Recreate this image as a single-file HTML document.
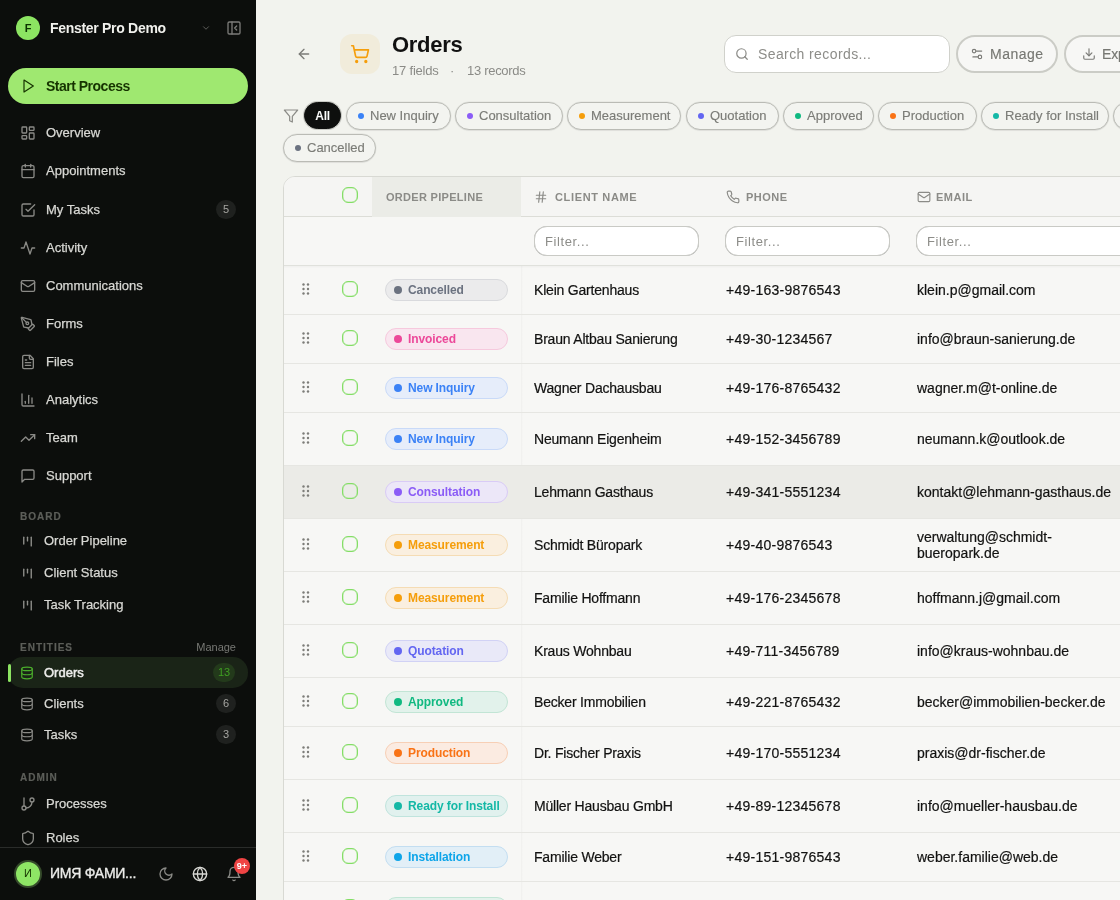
<!DOCTYPE html>
<html><head><meta charset="utf-8">
<style>
*{box-sizing:border-box;margin:0;padding:0}
html,body{width:1120px;height:900px;overflow:hidden}
.sb,#main{will-change:transform}
body{background:#f2f3ee;font-family:"Liberation Sans",sans-serif;position:relative;color:#161616}
.a{position:absolute}
svg{display:block}
.sb{position:absolute;left:0;top:0;width:256px;height:900px;background:#0c0e0c;overflow:hidden}
.ic{position:absolute;fill:none;stroke-linecap:round;stroke-linejoin:round}
.nav{position:absolute;left:46px;font-size:13px;color:#d8d8d4;-webkit-text-stroke:0.25px #d8d8d4;line-height:16px;white-space:nowrap}
.sec{position:absolute;left:20px;font-size:10px;font-weight:bold;color:#5c5e59;letter-spacing:1px;line-height:12px;-webkit-text-stroke:0.2px #5c5e59}
.cnt{position:absolute;width:20px;height:19px;border-radius:10px;background:#1f211f;color:#a6a6a2;font-size:11px;line-height:19px;text-align:center}
.sub{font-size:13px;color:#8b8b87;line-height:16px}
.btn{top:35px;height:38px;border-radius:19px;background:#f7f7f5;border:2px solid #cbccc6}
.chip{top:102px;height:28px;border-radius:14px;border:1px solid #babbb5;box-shadow:0 0 0 0.5px rgba(0,0,0,0.07),0 1px 1px rgba(0,0,0,0.05);background:#f3f4f0;display:flex;align-items:center;padding-left:11px;font-size:13px;color:#7b7c77;-webkit-text-stroke:0.15px #7b7c77;white-space:nowrap;line-height:16px}
.chip i{display:inline-block;width:6px;height:6px;border-radius:3px;margin-right:6px;flex:none}
.tbl{position:absolute;left:283px;top:176px;width:900px;height:760px;background:#f7f7f5;border:1px solid #d8d9d3;border-radius:12px 0 0 0;overflow:hidden}
.tbl .a, .tbl .ic{position:absolute}
.thead{position:absolute;left:0;top:0;width:100%;height:40px;border-bottom:1px solid #dcddd7;background:#f5f5f3}
.th{position:absolute;top:14px;font-size:11px;font-weight:bold;color:#8b8b87;letter-spacing:0.4px;line-height:12px}
.cb{position:absolute;width:16px;height:16px;border:1px solid #84de66;box-shadow:inset 0 0 0 0.3px #84de66;border-radius:6px;background:transparent}
.frow{position:absolute;left:-1px;top:40px;width:100%;height:49px;border-bottom:1px solid #e0e1dc;box-shadow:0 1px 2px rgba(0,0,0,0.04)}
.flt{position:absolute;top:9px;height:30px;border-radius:13px;border:1px solid #c9cac5;box-shadow:0 0 0.6px rgba(0,0,0,0.3);background:#fff;font-size:13px;color:#8d8d89;padding-left:10px;line-height:29px;letter-spacing:0.6px}
.row{position:absolute;left:-1px;width:902px;border-bottom:1px solid #e6e6e2}
.row.hov{background:#ebebe7}
.gripw{position:absolute;left:19px;top:50%;margin-top:-7px}
.grip{fill:#7d7d79}
.row .cb{left:59px;top:50%;margin-top:-9px}
.badge{position:absolute;left:102px;top:50%;margin-top:-11px;width:123px;height:22px;border:1px solid;border-radius:11px;font-size:12px;font-weight:bold;line-height:20px;padding-left:22px;white-space:nowrap;letter-spacing:-0.1px}
.badge i{position:absolute;left:8px;top:6px;width:8px;height:8px;border-radius:4px}
.c1,.c2,.c3{position:absolute;top:50%;margin-top:-8px;font-size:14px;line-height:16px;color:#121211;-webkit-text-stroke:0.2px #121211;white-space:nowrap}
.c1{left:251px;letter-spacing:-0.2px}
.c2{left:443px;letter-spacing:0.25px}
.c3{left:634px}
.c3.two{margin-top:-16px}
.vdiv{position:absolute;left:237px;top:89px;width:2px;height:700px;background:linear-gradient(90deg,rgba(0,0,0,0.03),rgba(0,0,0,0))}
</style></head><body>
<div class="sb">
  <div class="a" style="left:16px;top:16px;width:24px;height:24px;border-radius:12px;background:#8ce462;color:#0b3300;font-size:11px;font-weight:bold;text-align:center;line-height:24px">F</div>
  <div class="a" style="left:50px;top:20px;font-size:14px;font-weight:bold;color:#f1f1ed;line-height:16px;letter-spacing:-0.3px">Fenster Pro Demo</div>
  <svg class="ic" style="left:201px;top:23px" width="10" height="10" viewBox="0 0 24 24" stroke="#6d6d6a" stroke-width="2"><path d="m6 9 6 6 6-6"/></svg>
  <svg class="ic" style="left:226px;top:20px" width="16" height="16" viewBox="0 0 24 24" stroke="#7b7b78" stroke-width="2"><rect width="18" height="18" x="3" y="3" rx="2"/><path d="M9 3v18"/><path d="m16 15-3-3 3-3"/></svg>

  <div class="a" style="left:8px;top:68px;width:240px;height:36px;border-radius:18px;background:#9fe870"></div>
  <svg class="ic" style="left:20px;top:78px" width="16" height="16" viewBox="0 0 24 24" stroke="#163300" stroke-width="1.8"><polygon points="6 3 20 12 6 21 6 3"/></svg>
  <div class="a" style="left:46px;top:78px;font-size:14px;font-weight:bold;color:#163300;line-height:16px;letter-spacing:-0.5px">Start Process</div>

  <!-- nav -->
  <svg class="ic" style="left:20px;top:125px" width="16" height="16" viewBox="0 0 24 24" stroke="#8a8a86" stroke-width="2"><rect width="7" height="9" x="3" y="3" rx="1"/><rect width="7" height="5" x="14" y="3" rx="1"/><rect width="7" height="9" x="14" y="12" rx="1"/><rect width="7" height="5" x="3" y="16" rx="1"/></svg>
  <div class="nav" style="top:125px">Overview</div>
  <svg class="ic" style="left:20px;top:163px" width="16" height="16" viewBox="0 0 24 24" stroke="#8a8a86" stroke-width="2"><path d="M8 2v4"/><path d="M16 2v4"/><rect width="18" height="18" x="3" y="4" rx="2"/><path d="M3 10h18"/></svg>
  <div class="nav" style="top:163px">Appointments</div>
  <svg class="ic" style="left:20px;top:202px" width="16" height="16" viewBox="0 0 24 24" stroke="#8a8a86" stroke-width="2"><path d="m9 11 3 3L22 4"/><path d="M21 12v7a2 2 0 0 1-2 2H5a2 2 0 0 1-2-2V5a2 2 0 0 1 2-2h11"/></svg>
  <div class="nav" style="top:202px">My Tasks</div>
  <div class="cnt" style="left:216px;top:200px">5</div>
  <svg class="ic" style="left:20px;top:240px" width="16" height="16" viewBox="0 0 24 24" stroke="#8a8a86" stroke-width="2"><polyline points="22 12 18 12 15 21 9 3 6 12 2 12"/></svg>
  <div class="nav" style="top:240px">Activity</div>
  <svg class="ic" style="left:20px;top:278px" width="16" height="16" viewBox="0 0 24 24" stroke="#8a8a86" stroke-width="2"><rect width="20" height="16" x="2" y="4" rx="2"/><path d="m22 7-8.97 5.7a1.94 1.94 0 0 1-2.06 0L2 7"/></svg>
  <div class="nav" style="top:278px">Communications</div>
  <svg class="ic" style="left:20px;top:316px" width="16" height="16" viewBox="0 0 24 24" stroke="#8a8a86" stroke-width="2"><path d="M15.707 21.293a1 1 0 0 1-1.414 0l-1.586-1.586a1 1 0 0 1 0-1.414l5.586-5.586a1 1 0 0 1 1.414 0l1.586 1.586a1 1 0 0 1 0 1.414z"/><path d="m18 13-1.375-6.874a1 1 0 0 0-.746-.776L3.235 2.028a1 1 0 0 0-1.207 1.207L5.35 15.879a1 1 0 0 0 .776.746L13 18"/><path d="m2.3 2.3 7.286 7.286"/><circle cx="11" cy="11" r="2"/></svg>
  <div class="nav" style="top:316px">Forms</div>
  <svg class="ic" style="left:20px;top:354px" width="16" height="16" viewBox="0 0 24 24" stroke="#8a8a86" stroke-width="2"><path d="M15 2H6a2 2 0 0 0-2 2v16a2 2 0 0 0 2 2h12a2 2 0 0 0 2-2V7Z"/><path d="M14 2v4a2 2 0 0 0 2 2h4"/><path d="M10 9H8"/><path d="M16 13H8"/><path d="M16 17H8"/></svg>
  <div class="nav" style="top:354px">Files</div>
  <svg class="ic" style="left:20px;top:392px" width="16" height="16" viewBox="0 0 24 24" stroke="#8a8a86" stroke-width="2"><path d="M3 3v16a2 2 0 0 0 2 2h16"/><path d="M18 17V9"/><path d="M13 17V5"/><path d="M8 17v-3"/></svg>
  <div class="nav" style="top:392px">Analytics</div>
  <svg class="ic" style="left:20px;top:430px" width="16" height="16" viewBox="0 0 24 24" stroke="#8a8a86" stroke-width="2"><polyline points="22 7 13.5 15.5 8.5 10.5 2 17"/><polyline points="16 7 22 7 22 13"/></svg>
  <div class="nav" style="top:430px">Team</div>
  <svg class="ic" style="left:20px;top:468px" width="16" height="16" viewBox="0 0 24 24" stroke="#8a8a86" stroke-width="2"><path d="M21 15a2 2 0 0 1-2 2H7l-4 4V5a2 2 0 0 1 2-2h14a2 2 0 0 1 2 2z"/></svg>
  <div class="nav" style="top:468px">Support</div>

  <div class="sec" style="top:511px">BOARD</div>
  <svg class="ic" style="left:20px;top:534px" width="15" height="15" viewBox="0 0 24 24" stroke="#8e8e8a" stroke-width="2.2"><path d="M6 5v11"/><path d="M12 5v6"/><path d="M18 5v14"/></svg>
  <div class="nav" style="left:44px;top:533px">Order Pipeline</div>
  <svg class="ic" style="left:20px;top:566px" width="15" height="15" viewBox="0 0 24 24" stroke="#8e8e8a" stroke-width="2.2"><path d="M6 5v11"/><path d="M12 5v6"/><path d="M18 5v14"/></svg>
  <div class="nav" style="left:44px;top:565px">Client Status</div>
  <svg class="ic" style="left:20px;top:598px" width="15" height="15" viewBox="0 0 24 24" stroke="#8e8e8a" stroke-width="2.2"><path d="M6 5v11"/><path d="M12 5v6"/><path d="M18 5v14"/></svg>
  <div class="nav" style="left:44px;top:597px">Task Tracking</div>

  <div class="sec" style="top:642px">ENTITIES</div>
  <div class="a" style="right:20px;top:641px;font-size:11px;color:#777874;line-height:13px">Manage</div>
  <div class="a" style="left:8px;top:657px;width:240px;height:31px;border-radius:15px;background:#1a2417"></div>
  <div class="a" style="left:8px;top:664px;width:3px;height:18px;border-radius:2px;background:#8ce462"></div>
  <svg class="ic" style="left:20px;top:666px" width="14" height="14" viewBox="0 0 24 24" stroke="#4caf2c" stroke-width="2"><ellipse cx="12" cy="5" rx="9" ry="3"/><path d="M3 5V19A9 3 0 0 0 21 19V5"/><path d="M3 12A9 3 0 0 0 21 12"/></svg>
  <div class="nav" style="left:44px;top:665px;color:#ececea;-webkit-text-stroke:0.5px #ececea">Orders</div>
  <div class="cnt" style="left:213px;top:663px;width:22px;background:#233a1b;color:#3f9f22">13</div>
  <svg class="ic" style="left:20px;top:697px" width="14" height="14" viewBox="0 0 24 24" stroke="#8a8a86" stroke-width="2"><ellipse cx="12" cy="5" rx="9" ry="3"/><path d="M3 5V19A9 3 0 0 0 21 19V5"/><path d="M3 12A9 3 0 0 0 21 12"/></svg>
  <div class="nav" style="left:44px;top:696px">Clients</div>
  <div class="cnt" style="left:216px;top:694px">6</div>
  <svg class="ic" style="left:20px;top:728px" width="14" height="14" viewBox="0 0 24 24" stroke="#8a8a86" stroke-width="2"><ellipse cx="12" cy="5" rx="9" ry="3"/><path d="M3 5V19A9 3 0 0 0 21 19V5"/><path d="M3 12A9 3 0 0 0 21 12"/></svg>
  <div class="nav" style="left:44px;top:727px">Tasks</div>
  <div class="cnt" style="left:216px;top:725px">3</div>

  <div class="sec" style="top:772px">ADMIN</div>
  <svg class="ic" style="left:20px;top:796px" width="16" height="16" viewBox="0 0 24 24" stroke="#8a8a86" stroke-width="2"><line x1="6" x2="6" y1="3" y2="15"/><circle cx="18" cy="6" r="3"/><circle cx="6" cy="18" r="3"/><path d="M18 9a9 9 0 0 1-9 9"/></svg>
  <div class="nav" style="top:796px">Processes</div>
  <svg class="ic" style="left:20px;top:830px" width="16" height="16" viewBox="0 0 24 24" stroke="#8a8a86" stroke-width="2"><path d="M20 13c0 5-3.5 7.5-7.66 8.95a1 1 0 0 1-.67-.01C7.5 20.5 4 18 4 13V6a1 1 0 0 1 1-1c2 0 4.5-1.2 6.24-2.72a1.17 1.17 0 0 1 1.52 0C14.51 3.81 17 5 19 5a1 1 0 0 1 1 1z"/></svg>
  <div class="nav" style="top:830px">Roles</div>

  <div class="a" style="left:0;top:847px;width:256px;height:53px;background:#0c0e0c;border-top:1px solid #2a2c2a"></div>
  <div class="a" style="left:14px;top:860px;width:28px;height:28px;border-radius:14px;background:#8ee565;border:2.5px solid #34492a;color:#163300;font-size:11px;text-align:center;line-height:23px">И</div>
  <div class="a" style="left:50px;top:865px;font-size:14px;color:#ececea;-webkit-text-stroke:0.35px #ececea;line-height:16px;letter-spacing:-0.25px">ИМЯ ФАМИ...</div>
  <svg class="ic" style="left:158px;top:866px" width="16" height="16" viewBox="0 0 24 24" stroke="#8a8a86" stroke-width="2"><path d="M12 3a6 6 0 0 0 9 9 9 9 0 1 1-9-9Z"/></svg>
  <svg class="ic" style="left:192px;top:866px" width="16" height="16" viewBox="0 0 24 24" stroke="#d8d8d4" stroke-width="2"><circle cx="12" cy="12" r="10"/><path d="M12 2a14.5 14.5 0 0 0 0 20 14.5 14.5 0 0 0 0-20"/><path d="M2 12h20"/></svg>
  <svg class="ic" style="left:226px;top:866px" width="16" height="16" viewBox="0 0 24 24" stroke="#8a8a86" stroke-width="2"><path d="M6 8a6 6 0 0 1 12 0c0 7 3 9 3 9H3s3-2 3-9"/><path d="M10.3 21a1.94 1.94 0 0 0 3.4 0"/></svg>
  <div class="a" style="left:234px;top:858px;width:16px;height:16px;border-radius:8px;background:#ef4444;color:#fff;font-size:9px;font-weight:bold;text-align:center;line-height:16px">9+</div>
</div>

<!-- MAIN -->
<div id="main">
  <svg class="ic" style="left:296px;top:46px" width="16" height="16" viewBox="0 0 24 24" stroke="#7b7b77" stroke-width="2"><path d="m12 19-7-7 7-7"/><path d="M19 12H5"/></svg>
  <div class="a" style="left:340px;top:34px;width:40px;height:40px;border-radius:12px;background:#f1ecdb"></div>
  <svg class="ic" style="left:350px;top:44px" width="20" height="20" viewBox="0 0 24 24" stroke="#f59e0b" stroke-width="2"><circle cx="8" cy="21" r="1"/><circle cx="19" cy="21" r="1"/><path d="M2.05 2.05h2l2.66 12.42a2 2 0 0 0 2 1.58h9.78a2 2 0 0 0 1.95-1.57l1.65-7.43H5.12"/></svg>
  <div class="a" style="left:392px;top:32px;font-size:22px;font-weight:bold;color:#111;line-height:26px;letter-spacing:-0.3px">Orders</div>
  <div class="a sub" style="left:392px;top:63px;letter-spacing:-0.2px">17 fields</div>
  <div class="a sub" style="left:450px;top:63px">·</div>
  <div class="a sub" style="left:467px;top:63px;letter-spacing:-0.3px">13 records</div>

  <div class="a" style="left:724px;top:35px;width:226px;height:38px;border-radius:12px;background:#fff;border:1px solid #d0d1cb"></div>
  <svg class="ic" style="left:735px;top:47px" width="14" height="14" viewBox="0 0 24 24" stroke="#8b8b87" stroke-width="2.1"><circle cx="11" cy="11" r="8"/><path d="m21 21-4.3-4.3"/></svg>
  <div class="a" style="left:758px;top:46px;font-size:14px;color:#8d8d89;line-height:16px;letter-spacing:0.4px">Search records...</div>

  <div class="a btn" style="left:956px;width:102px"></div>
  <svg class="ic" style="left:970px;top:47px" width="14" height="14" viewBox="0 0 24 24" stroke="#7b7b77" stroke-width="2"><path d="M20 7h-9"/><path d="M14 17H5"/><circle cx="17" cy="17" r="3"/><circle cx="7" cy="7" r="3"/></svg>
  <div class="a" style="left:990px;top:46px;font-size:14px;color:#777873;line-height:16px;letter-spacing:0.5px;-webkit-text-stroke:0.15px #777873">Manage</div>
  <div class="a btn" style="left:1064px;width:110px"></div>
  <svg class="ic" style="left:1082px;top:47px" width="14" height="14" viewBox="0 0 24 24" stroke="#7b7b77" stroke-width="2"><path d="M21 15v4a2 2 0 0 1-2 2H5a2 2 0 0 1-2-2v-4"/><polyline points="7 10 12 15 17 10"/><line x1="12" x2="12" y1="15" y2="3"/></svg>
  <div class="a" style="left:1102px;top:46px;font-size:14px;color:#777873;line-height:16px;letter-spacing:-0.2px;-webkit-text-stroke:0.15px #777873">Export</div>

  <svg class="ic" style="left:283px;top:108px" width="16" height="16" viewBox="0 0 24 24" stroke="#8b8b87" stroke-width="1.8"><polygon points="22 3 2 3 10 12.46 10 19 14 21 14 12.46 22 3"/></svg>
  <div class="a chip" style="left:304px;top:102px;height:27px;width:37px;background:#0e0f0e;border-color:#0e0f0e;box-shadow:0 0 0 1px #c9cac4;color:#fff;font-weight:bold;font-size:12px;justify-content:center;padding:0;letter-spacing:-0.3px">All</div>
  <div class="a chip" style="left:346px;width:105px"><i style="background:#3b82f6"></i>New Inquiry</div>
  <div class="a chip" style="left:455px;width:108px"><i style="background:#8b5cf6"></i>Consultation</div>
  <div class="a chip" style="left:567px;width:114px"><i style="background:#f59e0b"></i>Measurement</div>
  <div class="a chip" style="left:686px;width:93px"><i style="background:#6366f1"></i>Quotation</div>
  <div class="a chip" style="left:783px;width:91px"><i style="background:#10b981"></i>Approved</div>
  <div class="a chip" style="left:878px;width:99px"><i style="background:#f97316"></i>Production</div>
  <div class="a chip" style="left:981px;width:128px"><i style="background:#14b8a6"></i>Ready for Install</div>
  <div class="a chip" style="left:1113px;width:100px"><i style="background:#0ea5e9"></i>Installation</div>
  <div class="a chip" style="left:283px;top:134px;width:93px"><i style="background:#6b7280"></i>Cancelled</div>

  <div class="tbl">
    <div class="thead">
      <div class="cb" style="left:58px;top:10px"></div>
      <div class="a" style="left:88px;top:0;width:149px;height:40px;background:#ebece7"></div>
      <div class="th" style="left:102px;letter-spacing:0.3px">ORDER PIPELINE</div>
      <svg class="ic" style="left:250px;top:13px" width="14" height="14" viewBox="0 0 24 24" stroke="#8b8b87" stroke-width="2"><line x1="4" x2="20" y1="9" y2="9"/><line x1="4" x2="20" y1="15" y2="15"/><line x1="10" x2="8" y1="3" y2="21"/><line x1="16" x2="14" y1="3" y2="21"/></svg>
      <div class="th" style="left:271px;letter-spacing:0.65px">CLIENT NAME</div>
      <svg class="ic" style="left:442px;top:13px" width="14" height="14" viewBox="0 0 24 24" stroke="#8b8b87" stroke-width="2"><path d="M22 16.92v3a2 2 0 0 1-2.18 2 19.790 19.79 0 0 1-8.63-3.07 19.5 19.5 0 0 1-6-6 19.79 19.79 0 0 1-3.07-8.67A2 2 0 0 1 4.110 2h3a2 2 0 0 1 2 1.72 12.84 12.84 0 0 0 .7 2.81 2 2 0 0 1-.45 2.11L8.090 9.91a16 16 0 0 0 6 6l1.27-1.27a2 2 0 0 1 2.11-.45 12.84 12.84 0 0 0 2.81.7A2 2 0 0 1 22 16.92z"/></svg>
      <div class="th" style="left:462px;letter-spacing:0.5px">PHONE</div>
      <svg class="ic" style="left:633px;top:13px" width="14" height="14" viewBox="0 0 24 24" stroke="#8b8b87" stroke-width="2"><rect width="20" height="16" x="2" y="4" rx="2"/><path d="m22 7-8.97 5.7a1.94 1.94 0 0 1-2.06 0L2 7"/></svg>
      <div class="th" style="left:652px;letter-spacing:0.5px">EMAIL</div>
    </div>
    <div class="frow">
      <div class="flt" style="left:251px;width:165px">Filter...</div>
      <div class="flt" style="left:442px;width:165px">Filter...</div>
      <div class="flt" style="left:633px;width:300px">Filter...</div>
    </div>
    <div class="vdiv"></div>
<div class="row" style="top:89px;height:49px"><div class="gripw"><svg class="grip" width="8" height="12" viewBox="0 0 8 12"><circle cx="1.5" cy="1.5" r="1.2"/><circle cx="6" cy="1.5" r="1.2"/><circle cx="1.5" cy="6" r="1.2"/><circle cx="6" cy="6" r="1.2"/><circle cx="1.5" cy="10.5" r="1.2"/><circle cx="6" cy="10.5" r="1.2"/></svg></div><div class="cb"></div><div class="pcell"></div><div class="badge" style="background:#ebebec;border-color:#d9dadd;color:#6b7280"><i style="background:#6b7280"></i>Cancelled</div><div class="c1">Klein Gartenhaus</div><div class="c2">+49-163-9876543</div><div class="c3">klein.p@gmail.com</div></div>
<div class="row" style="top:138px;height:49px"><div class="gripw"><svg class="grip" width="8" height="12" viewBox="0 0 8 12"><circle cx="1.5" cy="1.5" r="1.2"/><circle cx="6" cy="1.5" r="1.2"/><circle cx="1.5" cy="6" r="1.2"/><circle cx="6" cy="6" r="1.2"/><circle cx="1.5" cy="10.5" r="1.2"/><circle cx="6" cy="10.5" r="1.2"/></svg></div><div class="cb"></div><div class="pcell"></div><div class="badge" style="background:#f9e6ef;border-color:#f6c9dd;color:#ec4899"><i style="background:#ec4899"></i>Invoiced</div><div class="c1">Braun Altbau Sanierung</div><div class="c2">+49-30-1234567</div><div class="c3">info@braun-sanierung.de</div></div>
<div class="row" style="top:187px;height:49px"><div class="gripw"><svg class="grip" width="8" height="12" viewBox="0 0 8 12"><circle cx="1.5" cy="1.5" r="1.2"/><circle cx="6" cy="1.5" r="1.2"/><circle cx="1.5" cy="6" r="1.2"/><circle cx="6" cy="6" r="1.2"/><circle cx="1.5" cy="10.5" r="1.2"/><circle cx="6" cy="10.5" r="1.2"/></svg></div><div class="cb"></div><div class="pcell"></div><div class="badge" style="background:#e6edfa;border-color:#c9daf8;color:#3b82f6"><i style="background:#3b82f6"></i>New Inquiry</div><div class="c1">Wagner Dachausbau</div><div class="c2">+49-176-8765432</div><div class="c3">wagner.m@t-online.de</div></div>
<div class="row" style="top:236px;height:53px"><div class="gripw"><svg class="grip" width="8" height="12" viewBox="0 0 8 12"><circle cx="1.5" cy="1.5" r="1.2"/><circle cx="6" cy="1.5" r="1.2"/><circle cx="1.5" cy="6" r="1.2"/><circle cx="6" cy="6" r="1.2"/><circle cx="1.5" cy="10.5" r="1.2"/><circle cx="6" cy="10.5" r="1.2"/></svg></div><div class="cb"></div><div class="pcell"></div><div class="badge" style="background:#e6edfa;border-color:#c9daf8;color:#3b82f6"><i style="background:#3b82f6"></i>New Inquiry</div><div class="c1">Neumann Eigenheim</div><div class="c2">+49-152-3456789</div><div class="c3">neumann.k@outlook.de</div></div>
<div class="row hov" style="top:289px;height:53px"><div class="gripw"><svg class="grip" width="8" height="12" viewBox="0 0 8 12"><circle cx="1.5" cy="1.5" r="1.2"/><circle cx="6" cy="1.5" r="1.2"/><circle cx="1.5" cy="6" r="1.2"/><circle cx="6" cy="6" r="1.2"/><circle cx="1.5" cy="10.5" r="1.2"/><circle cx="6" cy="10.5" r="1.2"/></svg></div><div class="cb"></div><div class="pcell"></div><div class="badge" style="background:#ece7f8;border-color:#d9cbf6;color:#8b5cf6"><i style="background:#8b5cf6"></i>Consultation</div><div class="c1">Lehmann Gasthaus</div><div class="c2">+49-341-5551234</div><div class="c3">kontakt@lehmann-gasthaus.de</div></div>
<div class="row" style="top:342px;height:53px"><div class="gripw"><svg class="grip" width="8" height="12" viewBox="0 0 8 12"><circle cx="1.5" cy="1.5" r="1.2"/><circle cx="6" cy="1.5" r="1.2"/><circle cx="1.5" cy="6" r="1.2"/><circle cx="6" cy="6" r="1.2"/><circle cx="1.5" cy="10.5" r="1.2"/><circle cx="6" cy="10.5" r="1.2"/></svg></div><div class="cb"></div><div class="pcell"></div><div class="badge" style="background:#faefdf;border-color:#f5dcb4;color:#f59e0b"><i style="background:#f59e0b"></i>Measurement</div><div class="c1">Schmidt Büropark</div><div class="c2">+49-40-9876543</div><div class="c3 two">verwaltung@schmidt-<br>bueropark.de</div></div>
<div class="row" style="top:395px;height:53px"><div class="gripw"><svg class="grip" width="8" height="12" viewBox="0 0 8 12"><circle cx="1.5" cy="1.5" r="1.2"/><circle cx="6" cy="1.5" r="1.2"/><circle cx="1.5" cy="6" r="1.2"/><circle cx="6" cy="6" r="1.2"/><circle cx="1.5" cy="10.5" r="1.2"/><circle cx="6" cy="10.5" r="1.2"/></svg></div><div class="cb"></div><div class="pcell"></div><div class="badge" style="background:#faefdf;border-color:#f5dcb4;color:#f59e0b"><i style="background:#f59e0b"></i>Measurement</div><div class="c1">Familie Hoffmann</div><div class="c2">+49-176-2345678</div><div class="c3">hoffmann.j@gmail.com</div></div>
<div class="row" style="top:448px;height:53px"><div class="gripw"><svg class="grip" width="8" height="12" viewBox="0 0 8 12"><circle cx="1.5" cy="1.5" r="1.2"/><circle cx="6" cy="1.5" r="1.2"/><circle cx="1.5" cy="6" r="1.2"/><circle cx="6" cy="6" r="1.2"/><circle cx="1.5" cy="10.5" r="1.2"/><circle cx="6" cy="10.5" r="1.2"/></svg></div><div class="cb"></div><div class="pcell"></div><div class="badge" style="background:#e9e9f8;border-color:#d1d2f5;color:#6366f1"><i style="background:#6366f1"></i>Quotation</div><div class="c1">Kraus Wohnbau</div><div class="c2">+49-711-3456789</div><div class="c3">info@kraus-wohnbau.de</div></div>
<div class="row" style="top:501px;height:49px"><div class="gripw"><svg class="grip" width="8" height="12" viewBox="0 0 8 12"><circle cx="1.5" cy="1.5" r="1.2"/><circle cx="6" cy="1.5" r="1.2"/><circle cx="1.5" cy="6" r="1.2"/><circle cx="6" cy="6" r="1.2"/><circle cx="1.5" cy="10.5" r="1.2"/><circle cx="6" cy="10.5" r="1.2"/></svg></div><div class="cb"></div><div class="pcell"></div><div class="badge" style="background:#e2f2eb;border-color:#c2e5d5;color:#10b981"><i style="background:#10b981"></i>Approved</div><div class="c1">Becker Immobilien</div><div class="c2">+49-221-8765432</div><div class="c3">becker@immobilien-becker.de</div></div>
<div class="row" style="top:550px;height:53px"><div class="gripw"><svg class="grip" width="8" height="12" viewBox="0 0 8 12"><circle cx="1.5" cy="1.5" r="1.2"/><circle cx="6" cy="1.5" r="1.2"/><circle cx="1.5" cy="6" r="1.2"/><circle cx="6" cy="6" r="1.2"/><circle cx="1.5" cy="10.5" r="1.2"/><circle cx="6" cy="10.5" r="1.2"/></svg></div><div class="cb"></div><div class="pcell"></div><div class="badge" style="background:#fbebe1;border-color:#f7cfb5;color:#f97316"><i style="background:#f97316"></i>Production</div><div class="c1">Dr. Fischer Praxis</div><div class="c2">+49-170-5551234</div><div class="c3">praxis@dr-fischer.de</div></div>
<div class="row" style="top:603px;height:53px"><div class="gripw"><svg class="grip" width="8" height="12" viewBox="0 0 8 12"><circle cx="1.5" cy="1.5" r="1.2"/><circle cx="6" cy="1.5" r="1.2"/><circle cx="1.5" cy="6" r="1.2"/><circle cx="6" cy="6" r="1.2"/><circle cx="1.5" cy="10.5" r="1.2"/><circle cx="6" cy="10.5" r="1.2"/></svg></div><div class="cb"></div><div class="pcell"></div><div class="badge" style="background:#e1f1ee;border-color:#c0e4dd;color:#14b8a6"><i style="background:#14b8a6"></i>Ready for Install</div><div class="c1">Müller Hausbau GmbH</div><div class="c2">+49-89-12345678</div><div class="c3">info@mueller-hausbau.de</div></div>
<div class="row" style="top:656px;height:49px"><div class="gripw"><svg class="grip" width="8" height="12" viewBox="0 0 8 12"><circle cx="1.5" cy="1.5" r="1.2"/><circle cx="6" cy="1.5" r="1.2"/><circle cx="1.5" cy="6" r="1.2"/><circle cx="6" cy="6" r="1.2"/><circle cx="1.5" cy="10.5" r="1.2"/><circle cx="6" cy="10.5" r="1.2"/></svg></div><div class="cb"></div><div class="pcell"></div><div class="badge" style="background:#e2eff7;border-color:#c3def1;color:#0ea5e9"><i style="background:#0ea5e9"></i>Installation</div><div class="c1">Familie Weber</div><div class="c2">+49-151-9876543</div><div class="c3">weber.familie@web.de</div></div>
<div class="row" style="top:705px;height:53px"><div class="gripw"><svg class="grip" width="8" height="12" viewBox="0 0 8 12"><circle cx="1.5" cy="1.5" r="1.2"/><circle cx="6" cy="1.5" r="1.2"/><circle cx="1.5" cy="6" r="1.2"/><circle cx="6" cy="6" r="1.2"/><circle cx="1.5" cy="10.5" r="1.2"/><circle cx="6" cy="10.5" r="1.2"/></svg></div><div class="cb"></div><div class="pcell"></div><div class="badge" style="background:#e2f2eb;border-color:#c2e5d5;color:#10b981"><i style="background:#10b981"></i>Approved</div><div class="c1"></div><div class="c2"></div><div class="c3"></div></div>
  </div>
</div>

</body></html>
